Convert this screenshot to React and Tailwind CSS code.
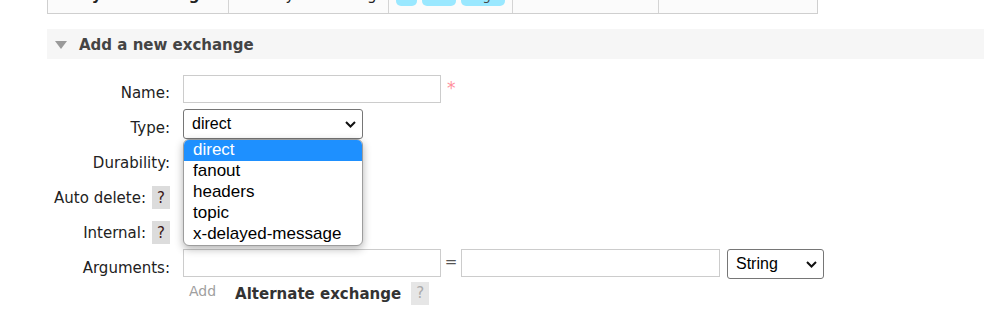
const Chevron = () => (
  <svg width="11" height="7" viewBox="0 0 11 7" className="shrink-0">
    <path d="M1 1l4.5 4.5L10 1" fill="none" stroke="#111" strokeWidth="2" />
  </svg>
);

const Help = ({ muted }) => (
  <span
    className={
      muted
        ? "inline-flex h-[23px] w-[18px] shrink-0 items-center justify-center bg-[#e6e6e6] text-[15px] text-[#aaa]"
        : "inline-flex h-[23px] w-[18px] shrink-0 items-center justify-center bg-[#dcdcdc] text-[15px] text-[#3a1515]"
    }
  >
    ?
  </span>
);

const FakeSelect = ({ value, width }) => (
  <div
    className={`flex h-[30px] items-center justify-between rounded-[3px] border border-[#767676] bg-white pl-[8px] pr-[6px] font-['Liberation_Sans',Arial,sans-serif] text-[16px] text-black ${width}`}
  >
    <span>{value}</span>
    <Chevron />
  </div>
);

const Row = ({ label, help, h = "h-[35px]", children }) => (
  <div className={`flex items-start ${h}`}>
    <div className="mt-[7px] flex h-[23px] w-[123px] items-center justify-end gap-[6px] leading-[20px]">
      <span>{label}</span>
      {help && <Help />}
    </div>
    <div className="ml-[13px] flex items-start">{children}</div>
  </div>
);

const options = ["direct", "fanout", "headers", "topic", "x-delayed-message"];

export default function App() {
  return (
    <div className="h-[321px] w-[984px] overflow-hidden bg-white font-['DejaVu_Sans',Verdana,sans-serif] text-[15px] text-[#222]">
      <div className="pl-[47px]">
        {/* tail of the exchanges table */}
        <div className="flex h-[14px] w-[771px] border-x border-b border-[#cfcfcf] bg-[#fbfbfb]">
          <div className="flex w-[181px] items-end overflow-hidden border-r border-[#d4d4d4] pl-[8px]">
            <span className="mb-[9px] whitespace-nowrap font-bold leading-[18px]">delayed-exchange</span>
          </div>
          <div className="flex w-[160px] items-end overflow-hidden border-r border-[#d4d4d4] pl-[10px]">
            <span className="mb-[9px] whitespace-nowrap leading-[18px]">x-delayed-message</span>
          </div>
          <div className="flex w-[124px] items-end gap-[5px] overflow-hidden border-r border-[#d4d4d4] pl-[7px] text-[13px] text-[#444]">
            <span className="mb-[7px] flex h-[20px] w-[21px] items-center justify-center rounded-[5px] bg-[#9ae8ff]">D</span>
            <span className="mb-[7px] flex h-[20px] w-[34px] items-center justify-center rounded-[5px] bg-[#9ae8ff]">AD</span>
            <span className="mb-[7px] flex h-[20px] w-[44px] items-center justify-center rounded-[5px] bg-[#9ae8ff]">Args</span>
          </div>
          <div className="w-[146px] border-r border-[#d4d4d4]" />
          <div className="w-[158px]" />
        </div>

        {/* section header */}
        <div className="mt-[15px] flex h-[30px] items-center bg-[#f6f6f6] pl-[8px] pt-[2px]">
          <svg width="12" height="8" viewBox="0 0 12 8">
            <path d="M0 0h12L6 8z" fill="#9a9a9a" />
          </svg>
          <h2 className="ml-[12px] text-[15px] font-bold text-[#444]">Add a new exchange</h2>
        </div>

        {/* form */}
        <div className="mt-[15px]">
          <Row label="Name:">
            <div className="mt-[1px] h-[28px] w-[258px] border border-[#cccccc] bg-white" />
            <span className="ml-[6px] mt-[6px] text-[17px] leading-none text-[#ff8f9c]">*</span>
          </Row>

          <Row label="Type:">
            <div className="relative">
              <FakeSelect value="direct" width="w-[180px]" />
              <ul className="absolute left-0 top-[30px] z-10 w-[180px] overflow-hidden rounded-[6px] border border-[#9d9d9d] bg-white font-['Liberation_Sans',Arial,sans-serif] text-[17px] leading-[19px] text-black shadow-[0_3px_9px_rgba(0,0,0,0.3)]">
                {options.map((o, i) => (
                  <li
                    key={o}
                    className={i === 0 ? "h-[21px] bg-[#1e90ff] pl-[9px] text-white" : "h-[21px] pl-[9px]"}
                  >
                    {o}
                  </li>
                ))}
              </ul>
            </div>
          </Row>

          <Row label="Durability:" />
          <Row label="Auto delete:" help />
          <Row label="Internal:" help />

          <Row label="Arguments:" h="h-[33px]">
            <div className="h-[28px] w-[258px] border border-[#cccccc] bg-white" />
            <span className="w-[20px] pt-[3px] text-center text-[15px] leading-[20px] text-[#555]">=</span>
            <div className="h-[28px] w-[259px] border border-[#cccccc] bg-white" />
            <div className="ml-[7px]">
              <FakeSelect value="String" width="w-[97px]" />
            </div>
          </Row>

          <div className="ml-[136px] flex h-[23px] items-start">
            <span className="-mt-[1px] pl-[6px] text-[14px] leading-[20px] text-[#a0a0a0]">Add</span>
            <span className="ml-[19px] mt-[2px] font-bold leading-[20px] text-[#333]">Alternate exchange</span>
            <span className="ml-[10px]">
              <Help muted />
            </span>
          </div>
        </div>
      </div>
    </div>
  );
}
